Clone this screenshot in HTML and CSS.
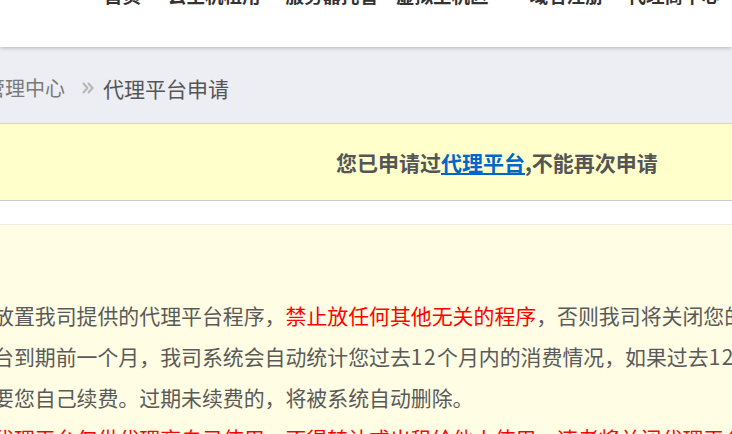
FILE: index.html
```html
<!DOCTYPE html>
<html lang="zh-CN">
<head>
<meta charset="utf-8">
<title>代理平台申请</title>
<link rel="stylesheet" href="styles.css">
</head>
<body>
<div class="header">
  <ul class="nav">
    <li class="nav-item n1">首页</li>
    <li class="nav-item n2">云主机租用</li>
    <li class="nav-item n3">服务器托管</li>
    <li class="nav-item n4">虚拟主机区</li>
    <li class="nav-item n5">域名注册</li>
    <li class="nav-item n6">代理商中心</li>
  </ul>
</div>
<div class="crumb">
  <span class="crumb-link">管理中心</span>
  <svg class="crumb-sep" width="14" height="14" viewBox="0 0 14 14"><path d="M2 2 L6.5 7 L2 12 M7 2 L11.5 7 L7 12" fill="none" stroke="#b5b5b5" stroke-width="2"/></svg>
  <span class="crumb-current">代理平台申请</span>
</div>
<div class="notice">
  <span class="notice-text">您已申请过<a class="notice-link" href="#">代理平台</a>,不能再次申请</span>
</div>
<div class="spacer"></div>
<div class="panel">
  <p class="line">放置我司提供的代理平台程序，<span class="red">禁止放任何其他无关的程序</span>，否则我司将关闭您的代理平台。</p>
  <p class="line">台到期前一个月，我司系统会自动统计您过去<span class="num">12</span>个月内的消费情况，如果过去<span class="num">12</span>个月消费达标，将自动续费。</p>
  <p class="line">要您自己续费。过期未续费的，将被系统自动删除。</p>
  <p class="line red">代理平台仅供代理商自己使用，不得转让或出租给他人使用，违者将关闭代理平台。</p>
</div>
</body>
</html>
```
FILE: styles.css
```css
html, body {
  margin: 0;
  padding: 0;
  overflow: hidden;
}
body {
  font-family: "Noto Sans CJK SC", "Microsoft YaHei", sans-serif;
  background: #ffffff;
  color: #555555;
}
.header {
  height: 47px;
  background: #ffffff;
  box-shadow: 0 1px 4px rgba(0, 0, 0, 0.24);
  position: relative;
  z-index: 1;
  overflow: hidden;
}
.nav {
  list-style: none;
  margin: -17px 0 0 0;
  padding: 0 0 0 104px;
  display: flex;
  font-size: 18.5px;
  font-weight: bold;
  line-height: 24px;
  color: #333333;
  white-space: nowrap;
}
.n1 { margin-right: 27px; }
.n2 { margin-right: 25px; }
.n3 { margin-right: 18px; }
.n4 { margin-right: 41px; }
.n5 { margin-right: 24px; }
.crumb {
  height: 77px;
  box-sizing: border-box;
  padding-top: 5px;
  background: #eceef3;
  border-bottom: 1px solid #d4d4d4;
  display: flex;
  align-items: center;
  font-size: 20px;
  white-space: nowrap;
}
.crumb-link {
  margin-left: -15px;
  color: #7a7a7a;
}
.crumb-sep {
  margin: 0 8px 0 16px;
}
.crumb-current {
  color: #555555;
  font-size: 21px;
}
.notice {
  height: 76px;
  background: #ffffcc;
  border-bottom: 1px solid #cccccc;
  display: flex;
  align-items: center;
  padding-left: 336px;
  font-size: 21px;
  font-weight: bold;
  color: #555555;
  white-space: nowrap;
}
.notice-link {
  color: #0066cc;
  text-decoration: underline;
}
.spacer {
  height: 23px;
  background: #ffffff;
}
.panel {
  background: #fffde3;
  border-top: 1px solid #ecece4;
  padding-top: 70px;
  height: 300px;
}
.line {
  margin: 0 0 0 -7px;
  font-size: 20.9px;
  line-height: 41px;
  white-space: nowrap;
  color: #5a5a5a;
}
.num {
  letter-spacing: 1.5px;
}
.red {
  color: #ff0000;
}
```
